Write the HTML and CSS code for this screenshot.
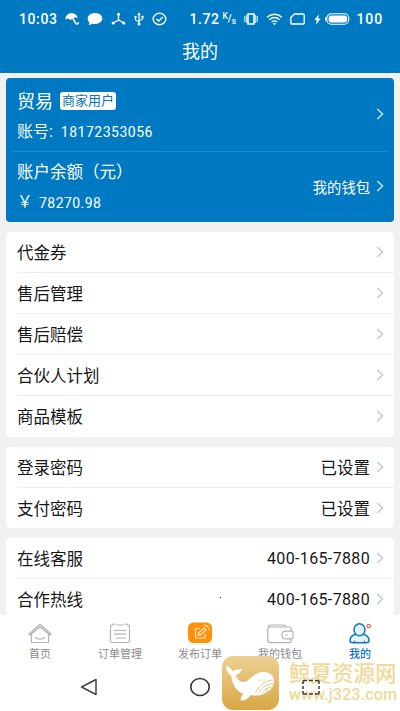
FILE: index.html
```html
<!DOCTYPE html>
<html lang="zh-CN">
<head>
<meta charset="utf-8">
<meta name="viewport" content="width=device-width">
<title>我的</title>
<link rel="stylesheet" href="styles.css">
</head>
<body>
<svg class="defs" width="0" height="0"><symbol id="chevron" viewBox="0 0 8 12"><path d="M1.2 1l5.4 5-5.4 5" fill="none" stroke="currentColor" stroke-width="1.3"/></symbol></svg>
<div class="screen">
  <header class="header">
    <div class="status">
      <div class="status-left">
        <span class="clock">10:03</span>
        <svg class="i-umbrella" width="15" height="14" viewBox="0 0 15 14"><path d="M.6 7.500C0 3.500 4 .2 8 1.200c2.500.6 4.300 2.200 4.700 4.600L8.900 5.600 5.500 8 3.400 6.500z" fill="#fff"/><path d="M6.500 4l4.300 7.400c.8 1.200 2.600.6 2.700-1.200" fill="none" stroke="#fff" stroke-width="1.500"/></svg>
        <svg class="i-chat" width="16" height="14" viewBox="0 0 16 14"><path d="M8 1c4.300 0 7.300 2.400 7.300 5.500S12 12 8 12c-1 0-1.900-.1-2.700-.3-1.200.8-2.600 1.100-4 1 .8-.7 1.200-1.500 1.200-2.300C1.200 9.400.7 8 .7 6.500.7 3.400 3.700 1 8 1z" fill="#fff"/></svg>
        <svg class="i-node" width="15" height="14" viewBox="0 0 15 14"><path d="M7.500 2v6L2 11M7.500 8l5.500 3" fill="none" stroke="#fff" stroke-width="1.400"/><circle cx="7.500" cy="2.200" r="1.500" fill="#fff"/><circle cx="2.200" cy="11" r="1.600" fill="#fff"/><circle cx="12.800" cy="11" r="1.600" fill="#fff"/></svg>
        <svg class="i-usb" width="10" height="14" viewBox="0 0 10 14"><path d="M5 12V2M5 10L1.500 8V5M5 9l3.500-2V4.500" fill="none" stroke="#fff" stroke-width="1.200"/><path d="M3.200 3L5 .2 6.800 3z" fill="#fff"/><circle cx="5" cy="12" r="1.500" fill="#fff"/><circle cx="1.500" cy="5" r="1.200" fill="#fff"/><path d="M7.400 3.800h2.200V6H7.400z" fill="#fff"/></svg>
        <svg class="i-check" width="15" height="14" viewBox="0 0 15 14"><ellipse cx="7.500" cy="7" rx="6.300" ry="5.700" fill="none" stroke="#fff" stroke-width="1.400"/><path d="M4.500 7l2.300 2L10.800 5" fill="none" stroke="#fff" stroke-width="1.500"/></svg>
      </div>
      <div class="status-right">
        <span class="speed">1.72</span><span class="unit"><sup>K</sup>/<sub>s</sub></span>
        <svg class="i-vibrate" width="14" height="14" viewBox="0 0 14 14"><path d="M4 2h6v10H4z" fill="none" stroke="#fff" stroke-width="1.600"/><path d="M.8 4v6M13.200 4v6M2.300 3v8M11.700 3v8" stroke="#fff" stroke-width=".9"/></svg>
        <svg class="i-wifi" width="17" height="14" viewBox="0 0 17 14"><path d="M1 5.200c4.500-4 10.500-4 15 0M3.400 7.700c3.200-2.700 7-2.700 10.200 0M5.700 10c1.900-1.500 3.700-1.500 5.600 0" fill="none" stroke="#fff" stroke-width="1.400"/><path d="M6.800 11.300h3.400l-1.700 2z" fill="#fff"/></svg>
        <svg class="i-sim" width="15" height="12" viewBox="0 0 15 12"><path d="M4.500 1h8.700q1 0 1 1v8q0 1-1 1H1.800q-1 0-1-1V4.500z" fill="none" stroke="#fff" stroke-width="1.300"/></svg>
        <svg class="i-bolt" width="7" height="11" viewBox="0 0 7 11"><path d="M5 .3L.3 6h2.500L2 10.700 6.700 4.500H4z" fill="#fff"/></svg>
        <svg class="i-battery" width="25" height="12" viewBox="0 0 25 12"><rect x="1.800" y=".7" width="22" height="10.600" rx="4.500" fill="none" stroke="#fff" stroke-width="1.100"/><rect x="3.600" y="2.400" width="18.500" height="7.200" rx="2.500" fill="#fff"/><path d="M.6 4v4" stroke="#fff" stroke-width="1.200"/></svg>
        <span class="percent">100</span>
      </div>
    </div>
    <h1 class="title">我的</h1>
  </header>

  <main class="content">
    <section class="account">
      <div class="profile">
        <div>
          <div class="name">贸易<span class="badge">商家用户</span></div>
          <div class="number">账号: <span>18172353056</span></div>
        </div>
        <svg class="chevron"><use href="#chevron"/></svg>
      </div>
      <div class="wallet">
        <div>
          <div class="wallet-label">账户余额（元）</div>
          <div class="balance"><span class="yen">￥</span>78270.98</div>
        </div>
        <div class="wallet-link">我的钱包<svg class="chevron"><use href="#chevron"/></svg></div>
      </div>
    </section>

    <section class="list">
      <div class="row"><span>代金券</span><svg class="chevron"><use href="#chevron"/></svg></div>
      <div class="row"><span>售后管理</span><svg class="chevron"><use href="#chevron"/></svg></div>
      <div class="row"><span>售后赔偿</span><svg class="chevron"><use href="#chevron"/></svg></div>
      <div class="row"><span>合伙人计划</span><svg class="chevron"><use href="#chevron"/></svg></div>
      <div class="row"><span>商品模板</span><svg class="chevron"><use href="#chevron"/></svg></div>
    </section>
    <section class="list">
      <div class="row"><span>登录密码</span><span class="value">已设置</span><svg class="chevron"><use href="#chevron"/></svg></div>
      <div class="row"><span>支付密码</span><span class="value">已设置</span><svg class="chevron"><use href="#chevron"/></svg></div>
    </section>
    <section class="list">
      <div class="row"><span>在线客服</span><span class="value phone">400-165-7880</span><svg class="chevron"><use href="#chevron"/></svg></div>
      <div class="row"><span>合作热线</span><span class="value phone">400-165-7880</span><svg class="chevron"><use href="#chevron"/></svg></div>
    </section>
    <i class="speck"></i>
  </main>

  <nav class="tabs">
    <div class="tab"><svg width="26" height="26" viewBox="0 0 26 26" fill="none" stroke="#b3b3b3" stroke-width="1.200" stroke-linecap="round" stroke-linejoin="round"><path d="M2 13L13 3.500 24 13l-1.200 1L13 5.800 3.200 14z"/><path d="M4.500 13v8.500h17V13M8.500 16.500c2.500 2.200 6.500 2.200 9 0"/></svg><span>首页</span></div>
    <div class="tab"><svg width="26" height="26" viewBox="0 0 26 26" fill="none" stroke="#b3b3b3" stroke-width="1.200" stroke-linecap="round"><path d="M6 4H5Q3.500 4 3.500 5.500V20q0 1.500 1.500 1.500h16q1.500 0 1.500-1.500V5.500Q22.500 4 21 4h-1M10 4h6M6 3.200h2M18 3.200h2M7.500 9.500h11M7.500 13.200h11M9.500 17h9"/></svg><span>订单管理</span></div>
    <div class="tab"><svg width="26" height="26" viewBox="0 0 26 26"><rect x="1" y="1.500" width="24" height="20.500" rx="5.500" fill="#ff9008"/><g fill="none" stroke="#ffe9cd" stroke-width="1.200"><path d="M13 7.500H8.500v9.500H18v-4M11 14.500l.7-2.600L17 7l2 1.900-5.400 5z"/><path d="M17.500 4.200c3 .3 4.500 2 4.800 4.800" stroke-dasharray="4 1.200" stroke-width="1.500"/></g></svg><span>发布订单</span></div>
    <div class="tab"><svg width="30" height="26" viewBox="0 0 30 26" fill="none" stroke="#b3b3b3" stroke-width="1.200"><path d="M26 10V7.500Q26 6 24.500 6H5Q2.800 6 2.800 8v11.500Q2.800 21.700 5 21.700h19.500q1.500 0 1.500-1.500V18M3 7.500Q3 4 6.500 4h12q1.500 0 2 2"/><path d="M20.500 10.200h6q1.500 0 1.500 1.500v4.600q0 1.500-1.500 1.500h-6q-3.500 0-3.500-3.800t3.500-3.800zM20 14h3"/></svg><span>我的钱包</span></div>
    <div class="tab active"><svg width="26" height="26" viewBox="0 0 26 26"><path d="M9 13c-3.500 1-6 3.800-6 6.500 0 1.700.8 2.200 2.500 2.200h14c1.700 0 2.500-.5 2.500-2.200 0-2.700-2.500-5.500-6-6.500" fill="#e2f2fd" stroke="#1676b9" stroke-width="1.500"/><ellipse cx="12.500" cy="8.700" rx="5.500" ry="6" fill="#e2f2fd" stroke="#1676b9" stroke-width="1.500"/><path d="M7.500 21.700v-2M17.500 21.700v-2" stroke="#1676b9"/><circle cx="21.700" cy="5" r="1.700" fill="none" stroke="#e96550" stroke-width="1.200"/></svg><span>我的</span></div>
  </nav>

  <div class="system-nav">
    <svg width="22" height="20" viewBox="0 0 22 20"><path d="M3.500 10L18 2.500v15z" fill="none" stroke="#444" stroke-width="1.500" stroke-linejoin="round"/></svg>
    <svg width="22" height="20" viewBox="0 0 22 20"><ellipse cx="11" cy="10" rx="9.200" ry="8.500" fill="none" stroke="#333" stroke-width="1.600"/></svg>
    <svg class="recent" width="22" height="20" viewBox="0 0 22 20"><path d="M3 7V4.500q0-1 1-1h3M9 3.500h4M15 3.500h3q1 0 1 1V7M19 9v3M19 14v2q0 1-1 1h-3M13 17H9M7 17H4q-1 0-1-1v-2M3 12V9" fill="none" stroke="#3b3b3b" stroke-width="1.500"/></svg>
  </div>

  <div class="watermark">
    <svg class="whale" width="57" height="54" viewBox="0 0 57 54">
      <defs><linearGradient id="gold" x1="0" y1="0" x2="0" y2="1"><stop stop-color="#edd094"/><stop offset="1" stop-color="#d9a745"/></linearGradient></defs>
      <rect width="57" height="54" rx="11" fill="url(#gold)"/>
      <path d="M4 9.500C6 11.500 9 11.500 10.800 15.500 13.500 12.500 16 14.200 20 13c-.8 3-3.300 5.200-6.300 6 .8 3.500 3.500 6.800 7.800 7 6 .2 9.500-10 20-10 7 0 10.500 4.200 10.500 9 0 7.500-7.500 14.500-18 14.500-2.500 0-4 0-5.500-.5-2 3.500-6 6-10 5.500 0-2.500 1-4.500 3-6.500C15 36 10 28.500 9.300 19.500 5.500 17.500 4 13.500 4 9.500z" fill="#fff"/>
      <path d="M51 24c-8 .5-13 5-17.500 12.500M51 27.500c-6.500.8-11 4-14 9M49.500 31c-4.500.7-7.500 3-9.500 6.500M47 34.500c-2.500.5-3.500 1.500-4.500 3M36.500 24.500q1-1 2 0" fill="none" stroke="#e3bf74" stroke-width=".9"/>
    </svg>
    <div class="mark-text"><div class="mark-name">鲸夏资源网</div><div class="mark-url">www.j323.com</div></div>
  </div>
</div>
</body>
</html>
```
FILE: styles.css
```css
* { box-sizing: border-box; }
body { margin: 0; font-family: Roboto, "Noto Sans CJK SC", sans-serif; color: #171717; }
svg { display: block; flex: none; }
.defs { position: absolute; }
.screen { position: relative; width: 400px; height: 711px; overflow: hidden; display: flex; flex-direction: column; background: #fff; }

.header { flex: none; height: 73px; background: #0079c3; color: #fff; }
.status { height: 37px; padding: 1px 17.500px 0 19px; display: flex; align-items: center; justify-content: space-between; font-size: 14px; font-weight: 500; letter-spacing: .6px; }
.status-left, .status-right { display: flex; align-items: center; }
.clock { width: 46px; }
.i-chat { margin-left: 7px; }
.i-node { margin-left: 8px; }
.i-usb { margin-left: 8px; }
.i-check { margin-left: 8px; }
.speed { width: 33px; }
.unit { display: flex; width: 15px; font-size: 10px; line-height: 12px; letter-spacing: 0; }
.unit sup, .unit sub { font-size: 8.500px; line-height: 10px; vertical-align: baseline; }
.unit sup { margin-top: -2px; }
.unit sub { margin-top: 3px; }
.i-vibrate { margin-left: 7px; }
.i-wifi { margin-left: 8px; }
.i-sim { margin-left: 7px; }
.i-bolt { margin-left: 9px; }
.i-battery { margin: 0 6px 0 4px; }
.percent { margin-right: -.5px; letter-spacing: .9px; }
.title { margin: 0; padding-top: 1px; font-size: 18px; font-weight: 400; line-height: 28px; text-align: center; }

.content { position: relative; flex: none; height: 542px; padding: 5px 6px 0; overflow: hidden; background: #f1f1f1; }
.chevron { width: 8px; height: 12px; color: #c5c5c5; }
.account { height: 144px; padding: 0 6px; border-radius: 4px; background: #0079c3; color: #fff; }
.account .chevron { color: #d4eeff; }
.profile, .wallet { display: flex; justify-content: space-between; padding: 0 4px 0 5px; }
.profile { height: 74px; padding-top: 9px; border-bottom: 1px solid #1a8bd2; }
.profile > .chevron { margin-top: 21px; }
.name { display: flex; align-items: center; height: 26px; font-size: 18px; }
.badge { height: 18px; margin: 2px 0 0 7px; padding: 0 2px; border-radius: 3px; background: #fff; color: #0873b7; font-size: 13px; line-height: 18px; }
.number { height: 37px; font-size: 16px; line-height: 37px; }
.number span { margin-left: 4px; font-size: 14px; letter-spacing: .5px; }
.wallet { padding-top: 7px; }
.wallet-label { height: 28px; font-size: 16.500px; line-height: 28px; }
.balance { display: flex; align-items: center; height: 32px; font-size: 14px; letter-spacing: .45px; }
.yen { width: 22px; font-size: 15.500px; line-height: 18px; margin-top: -2px; }
.wallet-link { display: flex; align-items: center; gap: 6px; height: 54px; font-size: 14.300px; }

.list { margin-top: 10px; padding-left: 11px; border-radius: 4px; background: #fff; }
.row { display: flex; align-items: center; height: 41px; padding-right: 10px; border-bottom: 1px solid #eee; font-size: 16.500px; }
.row:last-child { height: 40.500px; border-bottom: 0; }
.row > span:first-child { flex: 1; }
.value { margin-right: 6px; }
.row > .phone { font-size: 16px; letter-spacing: .35px; }
.speck { position: absolute; left: 220px; top: 524px; width: 1px; height: 1px; background: #501018; }

.tabs { flex: none; display: grid; grid-template-columns: repeat(5, 1fr); height: 50px; padding-top: 6px; background: #fff; }
.tab { display: flex; flex-direction: column; align-items: center; color: #8b8b8b; font-size: 11px; line-height: 16px; }
.tab.active { color: #1676b9; font-weight: 500; }
.system-nav { display: flex; justify-content: space-between; padding: 12px 78px 0; }
.recent { position: relative; z-index: 1; }

.watermark { position: absolute; left: 222px; top: 656px; display: flex; gap: 10px; color: #f2d898; }
.mark-text { padding-top: 6px; white-space: nowrap; font-weight: 500; }
.mark-name { font-size: 21.500px; line-height: 23px; }
.mark-url { font-size: 16.200px; line-height: 20px; letter-spacing: .05px; }
```
